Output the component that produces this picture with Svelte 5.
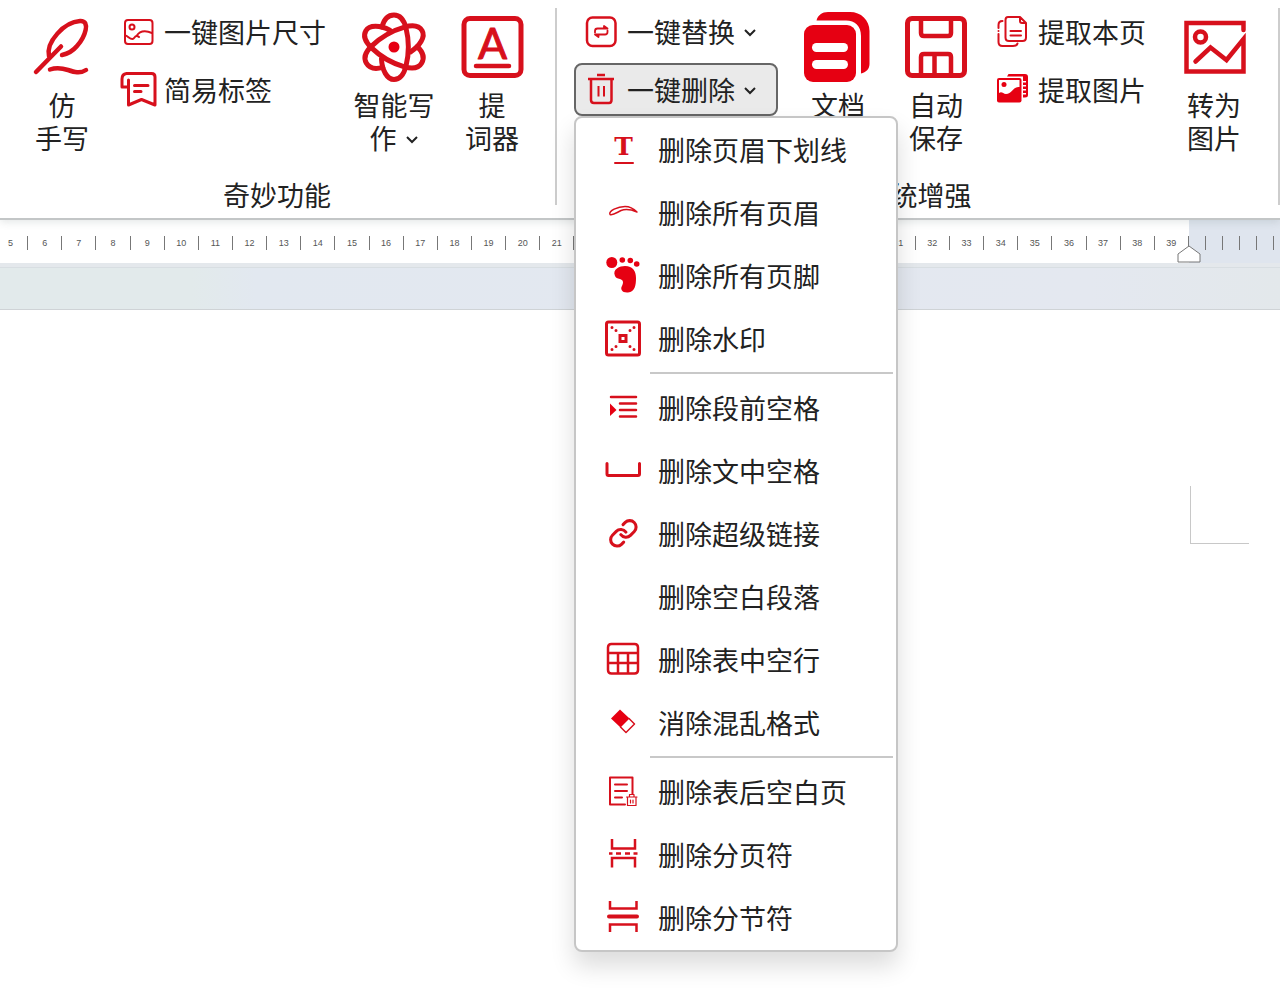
<script>
  let menuOpen = $state(true);

  const menuGroups = [
    [
      { icon: 'underline', label: '删除页眉下划线' },
      { icon: 'brow', label: '删除所有页眉' },
      { icon: 'foot', label: '删除所有页脚' },
      { icon: 'watermark', label: '删除水印' }
    ],
    [
      { icon: 'indent', label: '删除段前空格' },
      { icon: 'space', label: '删除文中空格' },
      { icon: 'link', label: '删除超级链接' },
      { icon: '', label: '删除空白段落' },
      { icon: 'table', label: '删除表中空行' },
      { icon: 'eraser', label: '消除混乱格式' }
    ],
    [
      { icon: 'pageTrash', label: '删除表后空白页' },
      { icon: 'pageBreak', label: '删除分页符' },
      { icon: 'sectionBreak', label: '删除分节符' }
    ]
  ];

  const rulerNumbers = Array.from({ length: 35 }, (_, i) => i + 5);

  // large icons, 70 x 70
  const atomOrbit =
    'M23 15C25 7 29 3 35 3C41 3 45 8 47 16C50 28 50 42 47 54C45 62 41 67.5 35 67.5C28 67.5 23 58 22.500 47';

  const largeIcons = {
    quill: `<g stroke-width="4.5"><path d="M9 60L34 34.500"/><path d="M22 44C19 30 37 10 53 9C64 8.500 58 25 50 34C45 40 40 42 35 43"/><path d="M23 57.500C30 55 35 56 41 58S53 62 59 58"/></g>`,
    atom: `<g stroke-width="5"><path d="${atomOrbit}"/><path d="${atomOrbit}" transform="rotate(120 35 35)"/><path d="${atomOrbit}" transform="rotate(240 35 35)"/></g><circle cx="35" cy="35" r="5.500" fill="#e60012" stroke="none"/>`,
    prompter: `<rect x="7" y="6.500" width="57" height="57" rx="6" stroke-width="5"/><text x="35.500" y="46.500" text-anchor="middle" font-family="Lato, sans-serif" font-size="43" fill="#d7101c" stroke-width="1">A</text><path d="M19 54H52" stroke-width="4.500"/>`,
    doc: `<g fill="#e60012" stroke="none"><path d="M13.500 8.500C15 3 19 0 25 0H47C58 0 66.500 8 66.500 19V52C66.500 57 63 60.500 58 61.500V24C58 14 52 8.500 43 8.500Z"/><rect x="1" y="13" width="52" height="57" rx="9"/></g><g fill="#fff" stroke="none"><rect x="9" y="31" width="36" height="9" rx="4.500"/><rect x="9" y="48" width="36" height="9" rx="4.500"/></g>`,
    save: `<rect x="6.500" y="6.500" width="57" height="57" rx="4.500" stroke-width="5"/><g stroke-width="4.500"><path d="M20 8V21Q20 24 23 24H47Q50 24 50 21V8M20 63V45Q20 42 23 42H47Q50 42 50 45V63M33.500 44V63"/></g>`,
    convert: `<g stroke-width="4.500" stroke-linejoin="miter"><path d="M64.500 18V11H7.500V59.500H64.500V27L47.500 48L31.500 35.500L16.500 49.500"/><circle cx="21.500" cy="25" r="5.500"/></g>`
  };

  // small icons, 36 x 36
  const smallIcons = {
    picture: `<g stroke-width="2"><rect x="5" y="6" width="27.500" height="24" rx="3"/><circle cx="12" cy="13" r="2.500"/><path d="M5 21.500C8 21.500 9 25 12.500 25C14.500 25 14.500 22 16.500 22C18 22 19 23 19 23M16.500 22C20 16.500 26 16.500 32 19"/></g>`,
    tag: `<path stroke-width="3" d="M8.500 8V33L21.500 27.500L35 33V5Q35 1.500 31.500 1.500H6.500Q2 2 2 7V15H8M14.500 13.500H28M14.500 19.500H21"/>`,
    replace: `<rect x="4" y="3.500" width="28.500" height="28.500" rx="5.500" stroke-width="2.500"/><g stroke-width="1.800"><path d="M12 18.500V17Q12 14.500 14.500 14.500H24.500L21 12V14"/><path d="M24.500 16.500V18Q24.500 20.500 22 20.500H12L15.500 23V21"/></g>`,
    trash: `<g stroke-width="2.500" stroke-linecap="butt"><path d="M5 7H31M14 3H22M8 8V28Q8 31 11 31H26Q28.500 31 28.500 28V8"/><path d="M15.500 14V24.500M21 14V24.500" stroke-width="2"/></g>`,
    pages: `<g stroke-width="2"><path d="M14 3H26L32 9V23.500Q32 27 28.500 27H15Q11.500 27 11.500 23.500V6Q11.500 3 14 3ZM26 3V7Q26 9 28 9H32M16.500 17H27M16.500 21.500H27"/><path d="M8.500 7Q4.500 7 4.500 11V14M4.500 20V28Q4.500 32 8.500 32H19Q23 32 23.500 29.500M4.500 17V17"/></g>`,
    pictures: `<path d="M13 4.500L14.500 2H31Q34 2 34 5V23Q34 25.500 31 25.500H29V22.500H32V21H29V18.500H32V17H29V14.500H32V13H29V10.500H32V9H29V4.500Z" fill="#e60012" stroke="none"/><rect x="3" y="6" width="24.500" height="24.500" rx="2" fill="#e60012" stroke="none"/><path d="M5 8H25.500V15C19 14 18 22 12 22C9 22 8 19 5 21Z" fill="#fff" stroke="none"/><circle cx="10" cy="12.500" r="2.500" fill="#e60012" stroke="none"/>`,
    underline: `<text x="18.500" y="23" text-anchor="middle" font-family="DejaVu Serif, serif" font-weight="700" font-size="25" fill="#d7101c" stroke="none">T</text><path d="M10 31H28" stroke-width="2"/>`,
    brow: `<path stroke-width="1.500" d="M5 19.500C3 16 13 11.500 20 11.500C26 11.500 29 14 32 17C26 14.500 20 14 16 15.500C11 18 8 20.500 5 19.500Z"/>`,
    foot: `<g fill="#e60012" stroke="none"><circle cx="6.800" cy="4.500" r="5.500"/><circle cx="17.300" cy="2" r="2.800"/><circle cx="25.300" cy="2.500" r="2.800"/><circle cx="31.700" cy="6" r="2.800"/><path d="M10 18C7 11 15 8 20 8C28 8 31 13 31 20C31 27 30 34 23 34.500C17 35 15 31 17 28C19 24 18 22 15 21C12 20.500 11 20 10 18Z"/></g>`,
    watermark: `<rect x="1.500" y="1" width="33" height="33" rx="2" stroke-width="3"/><rect x="15" y="14.500" width="6" height="6" stroke-width="3" stroke-linejoin="miter"/><g stroke-width="3"><path d="M7 6.500V6.500M11 9.500V9.500M29 6.500V6.500M25 9.500V9.500M7 28.500V28.500M11 25.500V25.500M29 28.500V28.500M25 25.500V25.500"/></g>`,
    indent: `<path stroke-width="2.500" d="M6 7H31M15 13.500H31M15 20H31M15 26.500H31"/><path d="M5 13.500L11.500 20L5 26Z" fill="#e60012" stroke="none"/>`,
    space: `<path stroke-width="3" d="M2 10.500V21Q2 22.500 3.500 22.500H33Q34.500 22.500 34.500 21V10.500"/>`,
    link: `<g transform="translate(3 2) scale(1.280)" stroke-width="2.400"><path d="M10 13a5 5 0 0 0 7.540.540l3-3a5 5 0 0 0-7.070-7.070l-1.720 1.710"/><path d="M14 11a5 5 0 0 0-7.540-.540l-3 3a5 5 0 0 0 7.070 7.070l1.710-1.710"/></g>`,
    table: `<path stroke-width="2.500" d="M6.500 2H29.500Q33 2 33 5.500V28Q33 31.500 29.500 31.500H6.500Q3 31.500 3 28V5.500Q3 2 6.500 2ZM3 11H33M3 21H33M13 11V31M23 11V31"/>`,
    eraser: `<path d="M15 4.500L24.500 13.500L15.500 22.500L6 13.500Z" fill="#e60012" stroke="none"/><path d="M24 13.500L29.500 19L21 27.500L15.500 22" stroke-width="1.500"/>`,
    pageTrash: `<path stroke-width="2" d="M20 30.500H5V3.500H27.500V20M10 10.500H22M10 17H22M10 23.500H17"/><path stroke-width="1.200" d="M21.500 23H32M24.500 23V20.500H29V23M22.500 23V31.500H31V23M25.500 26V29M28 26V29"/>`,
    pageBreak: `<g stroke-width="2.500" stroke-linecap="butt" stroke-linejoin="miter"><path d="M7 2V11.500H30V2M7 30.500V21H30V30.500"/><path d="M4 16.500H7.500M11 16.500H16M20 16.500H25M28.500 16.500H32.500"/></g>`,
    sectionBreak: `<g stroke-width="2.500" stroke-linecap="butt" stroke-linejoin="miter"><path d="M5 1V8.500H31.500V1M5 32V24.500H31.500V32"/></g><path d="M4 16.500H32" stroke-width="4"/>`
  };
</script>

{#snippet small(name)}
  <svg class="icon-small" viewBox="0 0 36 36" aria-hidden="true">{@html smallIcons[name]}</svg>
{/snippet}

{#snippet chevron()}
  <svg class="chevron" viewBox="0 0 14 14" aria-hidden="true"><path d="M2 5l5 5 5-5" /></svg>
{/snippet}

{#snippet large(name, label, arrow)}
  <button class="large">
    <svg class="icon-large" viewBox="0 0 70 70" aria-hidden="true">{@html largeIcons[name]}</svg>
    <span class="label">{label}{#if arrow}{@render chevron()}{/if}</span>
  </button>
{/snippet}

<div class="app">
  <header class="ribbon">
    <section class="group magic">
      <div class="tools">
        {@render large('quill', '仿\n手写')}
        <div class="stack">
          <button class="small">{@render small('picture')}一键图片尺寸</button>
          <button class="small">{@render small('tag')}简易标签</button>
        </div>
        {@render large('atom', '智能写\n作', true)}
        {@render large('prompter', '提\n词器')}
      </div>
      <h2>奇妙功能</h2>
    </section>
    <div class="divider"></div>
    <section class="group system">
      <div class="tools">
        <div class="stack menus">
          <button class="small drop">{@render small('replace')}一键替换{@render chevron()}</button>
          <div class="anchor">
            <button
              class="small drop"
              class:active={menuOpen}
              aria-haspopup="menu"
              aria-expanded={menuOpen}
              onclick={() => (menuOpen = !menuOpen)}
            >
              {@render small('trash')}一键删除{@render chevron()}
            </button>
            {#if menuOpen}
              <div class="menu" role="menu">
                {#each menuGroups as group, i}
                  {#if i > 0}
                    <div class="separator" role="separator"></div>
                  {/if}
                  {#each group as item}
                    <button class="item" role="menuitem">{@render small(item.icon)}{item.label}</button>
                  {/each}
                {/each}
              </div>
            {/if}
          </div>
        </div>
        {@render large('doc', '文档')}
        {@render large('save', '自动\n保存')}
        <div class="stack">
          <button class="small">{@render small('pages')}提取本页</button>
          <button class="small">{@render small('pictures')}提取图片</button>
        </div>
        {@render large('convert', '转为\n图片')}
      </div>
      <h2>系统增强</h2>
    </section>
    <div class="divider"></div>
  </header>

  <div class="ruler">
    <div class="scale">
      {#each rulerNumbers as n}
        <span class="unit">{n}</span>
      {/each}
      <svg class="marker" viewBox="0 0 24 18" aria-hidden="true">
        <path d="M12 1L23 9V17H1V9Z" />
      </svg>
    </div>
    <div class="outside">
      {#each Array(5) as _}
        <span class="tick"></span>
      {/each}
    </div>
  </div>
  <div class="band"></div>

  <main class="page">
    <div class="crop"></div>
  </main>
</div>

<style>
  :global(body) {
    margin: 0;
    background: #fff;
  }

  .app {
    display: flex;
    flex-direction: column;
    min-height: 100vh;
    overflow: hidden;
    color: #222;
    font-family: 'Noto Sans CJK SC', sans-serif;
    font-size: 27px;
    line-height: 33px;
  }

  button {
    margin: 0;
    padding: 0;
    border: 0;
    background: none;
    color: inherit;
    font: inherit;
    white-space: nowrap;
    cursor: pointer;
  }

  .ribbon {
    position: relative;
    z-index: 2;
    display: flex;
    height: 218px;
    border-bottom: 2px solid #c3c6c7;
    background: #fff;
    box-shadow: 0 2px 8px rgba(60, 80, 80, 0.14);
  }

  .group {
    display: flex;
    flex-direction: column;
    justify-content: space-between;
    box-sizing: border-box;
    padding-bottom: 7px;
  }

  .magic {
    padding-left: 13px;
    padding-right: 14px;
  }

  .system {
    flex: 1;
  }

  .system .tools {
    padding-left: 17px;
  }

  h2 {
    margin: 0;
    font-size: 27px;
    font-weight: 400;
    text-align: center;
  }

  .divider {
    width: 2px;
    margin: 8px 0 13px;
    background: #cdcdcd;
  }

  .tools {
    display: flex;
    align-items: flex-start;
  }

  .large {
    display: flex;
    flex-direction: column;
    align-items: center;
    width: 98px;
    padding-top: 12px;
  }

  .icon-large {
    width: 70px;
    height: 70px;
    margin-bottom: 6px;
  }

  .icon-large,
  .icon-small {
    flex: none;
    overflow: visible;
    fill: none;
    stroke: #d7101c;
    stroke-linecap: round;
    stroke-linejoin: round;
  }

  .icon-small {
    width: 36px;
    height: 36px;
  }

  .label {
    white-space: pre-line;
  }

  .chevron {
    width: 14px;
    height: 14px;
    fill: none;
    stroke: #222;
    stroke-width: 2;
  }

  .label .chevron {
    margin-left: 8px;
    vertical-align: 3px;
  }

  .stack {
    display: flex;
    flex-direction: column;
    gap: 5px;
    padding-top: 5px;
  }

  .menus {
    margin-right: 11px;
  }

  .small {
    display: flex;
    align-items: center;
    gap: 8px;
    box-sizing: border-box;
    height: 53px;
    padding: 0 17px 0 7px;
    border: 2px solid transparent;
    border-radius: 8px;
  }

  .drop {
    padding-right: 19px;
  }

  .active {
    border-color: #666;
    background: #eaeaea;
  }

  .anchor {
    position: relative;
  }

  .menu {
    position: absolute;
    top: 100%;
    left: 0;
    width: 320px;
    padding-bottom: 1px;
    border: 2px solid #c6c6c6;
    border-radius: 8px;
    background: #fff;
    box-shadow: 0 14px 24px rgba(0, 0, 0, 0.14);
  }

  .item {
    display: flex;
    align-items: center;
    gap: 17px;
    width: 100%;
    height: 63px;
    padding-left: 29px;
  }

  .item:hover {
    background: #f2f2f2;
  }

  .separator {
    height: 2px;
    margin: 2px 3px 2px 74px;
    background: #c8c8c8;
  }

  .ruler {
    display: flex;
    height: 43px;
    color: #555;
    font-family: 'Liberation Sans', sans-serif;
    font-size: 9px;
    line-height: 14px;
  }

  .scale {
    position: relative;
    display: flex;
    flex: 1;
    align-items: center;
    margin-left: -6px;
    padding-top: 2px;
  }

  .unit {
    flex: 1;
    border-right: 1px solid #777;
    text-align: center;
  }

  .marker {
    position: absolute;
    right: -12px;
    bottom: 0;
    z-index: 1;
    width: 24px;
    height: 18px;
    fill: #fff;
    stroke: #777;
  }

  .outside {
    display: flex;
    flex: none;
    align-items: center;
    width: 91px;
    padding-top: 2px;
    background: #dfe5ee;
  }

  .tick {
    width: 16px;
    height: 14px;
    border-right: 1px solid #777;
  }

  .band {
    height: 42px;
    border-top: 4px solid #e4e8ec;
    border-bottom: 1px solid #cfd3d6;
    background: linear-gradient(90deg, #e2eaeb 0%, #e2eaeb 15%, #e2e8f0 20%, #e4e8f0 85%, #e3e8eb 100%);
    box-shadow: inset 0 1px #d8dee2;
  }

  .page {
    display: flex;
    flex: 1;
    align-items: flex-start;
    justify-content: flex-end;
    padding: 176px 31px 0 0;
  }

  .crop {
    width: 58px;
    height: 57px;
    border-left: 1px solid #c8c8c8;
    border-bottom: 1px solid #c8c8c8;
  }
</style>
